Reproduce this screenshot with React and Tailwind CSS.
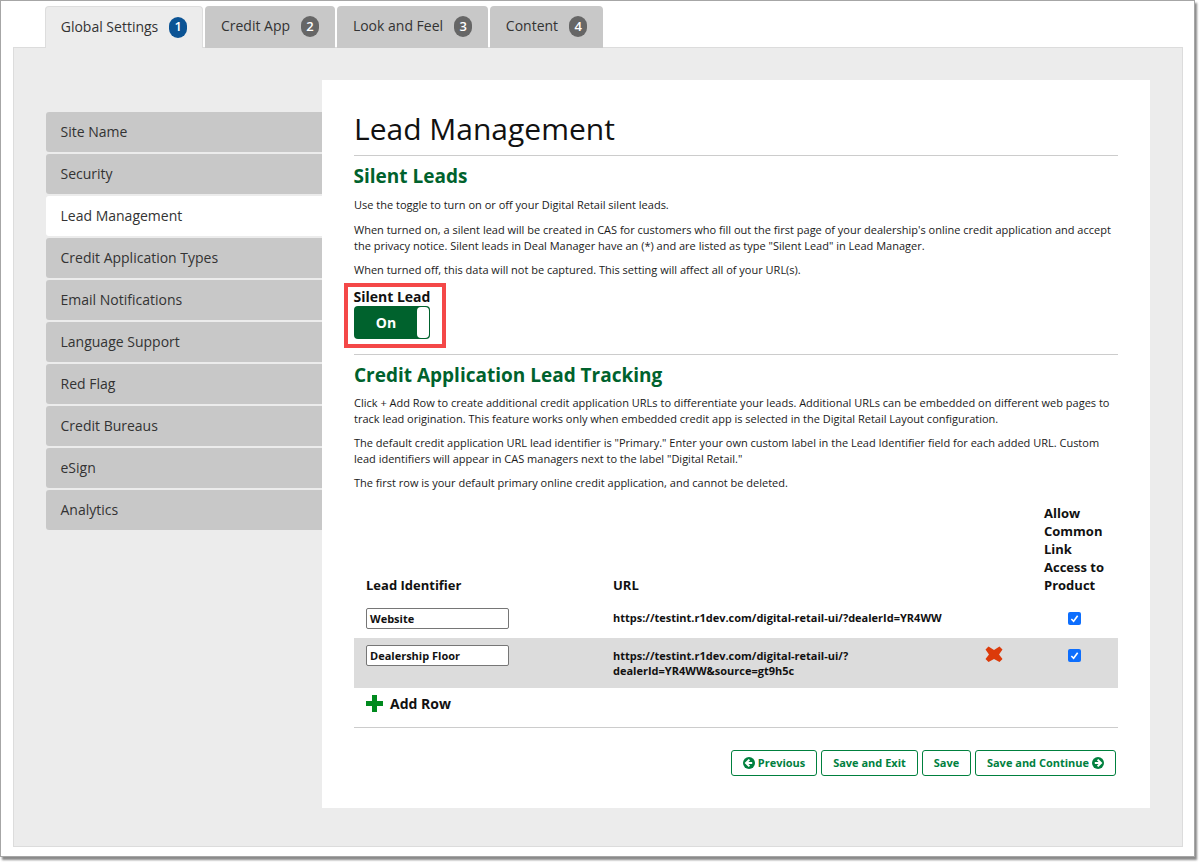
import React from "react";

const tabs = [
  ["Global Settings", "1", true, "w-[158px]"],
  ["Credit App", "2", false, "w-[130px]"],
  ["Look and Feel", "3", false, "w-[151px]"],
  ["Content", "4", false, "w-[113px]"],
];
const side = ["Site Name", "Security", "Lead Management", "Credit Application Types", "Email Notifications", "Language Support", "Red Flag", "Credit Bureaus", "eSign", "Analytics"];

function Circle({ dir }) {
  return (
    <svg width="12" height="12" viewBox="0 0 12 12" className="shrink-0">
      <circle cx="6" cy="6" r="6" fill="#00803e" />
      {dir === "left" ? (
        <path d="M6.4 2.6 3 6l3.4 3.4M3.4 6h5.8" fill="none" stroke="#fff" strokeWidth="2" />
      ) : (
        <path d="M5.6 2.6 9 6 5.6 9.4M8.6 6H2.8" fill="none" stroke="#fff" strokeWidth="2" />
      )}
    </svg>
  );
}

function Check() {
  return (
    <span className="inline-flex w-[13px] h-[13px] rounded-[2px] bg-[#0d6efd] items-center justify-center">
      <svg width="9" height="9" viewBox="0 0 10 10"><path d="M1.5 5.5 4 8l4.5-6" fill="none" stroke="#fff" strokeWidth="1.8" /></svg>
    </span>
  );
}

function Btn({ children, w }) {
  return (
    <button className={`h-[26px] ${w} border border-[#00803e] rounded-[3px] bg-white text-[#00803e] text-[11px] font-bold flex items-center justify-center gap-[3px]`}>
      {children}
    </button>
  );
}

export default function App() {
  return (
    <div className="w-[1202px] h-[864px] bg-white font-['Open_Sans',sans-serif]">
      <div className="w-[1195px] h-[857px] bg-white border border-[#a6a6a6] shadow-[2px_3px_2px_#8a8a8a] px-3 pt-[5px] box-border">
        <div className="flex gap-[2px] pl-[32px] h-[41px] relative z-10">
          {tabs.map(([t, n, a, w]) => (
            <div key={t} className={`${w} h-[42px] rounded-t-[4px] flex items-center justify-center gap-[11px] text-[14px] text-[#333] pb-[1px] ${a ? "bg-[#ececec] border border-b-0 border-[#ddd]" : "bg-[#c8c8c8] h-[41px]"}`}>
              <span className="mb-[2px]">{t}</span>
              <span className={`w-[18px] h-[21px] rounded-full text-white text-[13px] font-semibold flex items-center justify-center ${a ? "bg-[#0b5394]" : "bg-[#666]"}`}>{n}</span>
            </div>
          ))}
        </div>
        <div className="w-[1170px] h-[800px] bg-[#ececec] border border-[#dcdcdc] pt-[32px] flex items-start box-border">
          <div className="w-[276px] ml-[32px] mt-[32px] flex flex-col gap-[2px] shrink-0">
            {side.map((s) => (
              <div key={s} className={`h-[40px] flex items-center pl-[14.5px] pb-[2px] text-[14px] text-[#333] rounded-l-[3px] ${s === "Lead Management" ? "bg-white" : "bg-[#c8c8c8]"}`}>{s}</div>
            ))}
          </div>
          <div className="w-[828px] h-[728px] bg-white px-[32px] text-[11px] leading-[16px] text-[#1a1a1a] box-border">
            <h1 className="text-[30px] leading-[40px] text-[#111] mt-[29px] pb-[6px] border-b border-[#ccc]">Lead Management</h1>
            <h2 className="text-[19px] leading-[26px] font-bold text-[#00622d] mt-[7px] -ml-[0.5px]">Silent Leads</h2>
            <p className="mt-[8px]">Use the toggle to turn on or off your Digital Retail silent leads.</p>
            <p className="mt-[9px]">When turned on, a silent lead will be created in CAS for customers who fill out the first page of your dealership's online credit application and accept the privacy notice. Silent leads in Deal Manager have an (*) and are listed as type "Silent Lead" in Lead Manager.</p>
            <p className="mt-[8px]">When turned off, this data will not be captured. This setting will affect all of your URL(s).</p>
            <div className="w-[102px] h-[65px] border-[4px] border-[#f44848] -ml-[10px] mt-[5px] pl-[5.5px] pt-[1px] box-border">
              <div className="text-[14px] leading-[18px] font-bold text-[#111]">Silent Lead</div>
              <div className="w-[76px] h-[33px] bg-[#00622d] rounded-[4px] flex items-center p-[1px] ml-[0.5px]">
                <span className="flex-1 text-center text-white text-[14px] font-bold">On</span>
                <span className="w-[12px] h-[31px] bg-white rounded-[4px]"></span>
              </div>
            </div>
            <div className="border-t border-[#ccc] mt-[6px] pt-[7px]">
              <h2 className="text-[19px] leading-[26px] font-bold text-[#00622d]">Credit Application Lead Tracking</h2>
              <p className="mt-[7px]">Click + Add Row to create additional credit application URLs to differentiate your leads. Additional URLs can be embedded on different web pages to track lead origination. This feature works only when embedded credit app is selected in the Digital Retail Layout configuration.</p>
              <p className="mt-[8px]">The default credit application URL lead identifier is "Primary." Enter your own custom label in the Lead Identifier field for each added URL. Custom lead identifiers will appear in CAS managers next to the label "Digital Retail."</p>
              <p className="mt-[8px]">The first row is your default primary online credit application, and cannot be deleted.</p>
            </div>
            <div className="mt-[7px] font-bold text-[#111]">
              <div className="flex items-end h-[102px] pb-[6px] text-[13px] leading-[18px]">
                <div className="w-[259px] pl-[12px]">Lead Identifier</div>
                <div className="w-[431px]">URL</div>
                <div className="w-[66px]">Allow Common Link Access to Product</div>
              </div>
              <div className="flex h-[38px] pt-[8px] items-start">
                <div className="w-[259px] pl-[12px]">
                  <div className="w-[143px] h-[21px] bg-white border border-[#767676] rounded-[2px] pl-[3px] leading-[20px]">Website</div>
                </div>
                <div className="w-[362px] pt-[2px]">https://testint.r1dev.com/digital-retail-ui/?dealerId=YR4WW</div>
                <div className="w-[69px]"></div>
                <div className="w-[74px] pl-[24px] pt-[4px] leading-none"><Check /></div>
              </div>
              <div className="flex h-[50px] pt-[7px] items-start bg-[#dcdcdc]">
                <div className="w-[259px] pl-[12px]">
                  <div className="w-[143px] h-[21px] bg-white border border-[#767676] rounded-[2px] pl-[3px] leading-[20px]">Dealership Floor</div>
                </div>
                <div className="w-[362px] pt-[3px] leading-[15px]">https://testint.r1dev.com/digital-retail-ui/?<br />dealerId=YR4WW&amp;source=gt9h5c</div>
                <div className="w-[69px] pl-[10px] pt-[1px]">
                  <svg width="18" height="17" viewBox="0 0 18 17"><path d="M0.5 3.5 3.5 0.5 9 4l5.5-3.500 3 3L14 8.500l3.500 4.500-3 3L9 13l-5.500 3-3-3L4 8.500z" fill="#dc3a0a" /></svg>
                </div>
                <div className="w-[74px] pl-[24px] pt-[4px] leading-none"><Check /></div>
              </div>
              <div className="flex items-center h-[40px] pb-[8px] pl-[12px] gap-[7px] text-[14px] border-b border-[#ccc]">
                <svg width="17" height="17" viewBox="0 0 17 17"><path d="M6 0h5v6h6v5h-6v6H6v-6H0V6h6z" fill="#008a1e" /></svg>
                Add Row
              </div>
            </div>
            <div className="flex justify-end gap-[4px] mt-[22px] pr-[2px]">
              <Btn w="w-[86px]"><Circle dir="left" />Previous</Btn>
              <Btn w="w-[97px]">Save and Exit</Btn>
              <Btn w="w-[49px]">Save</Btn>
              <Btn w="w-[141px]">Save and Continue<Circle dir="right" /></Btn>
            </div>
          </div>
        </div>
      </div>
    </div>
  );
}
